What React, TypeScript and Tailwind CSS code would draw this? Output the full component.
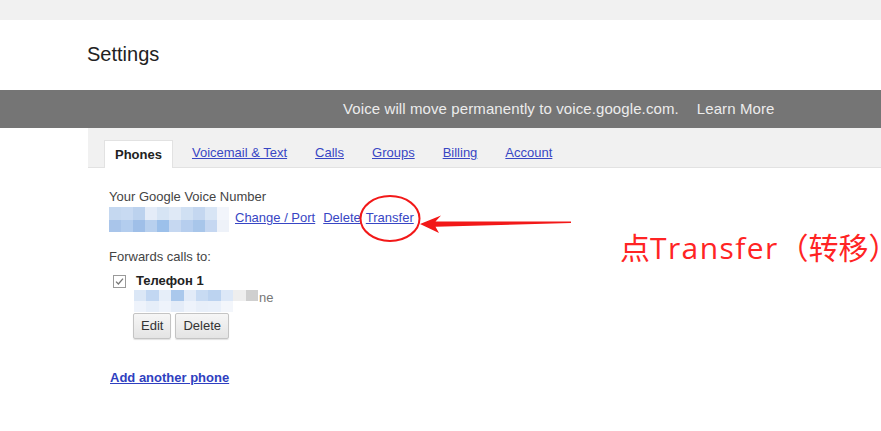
const numberTop = ['#c5d8f0', '#c8daf2', '#bcd2ee', '#e4ecf8', '#d6e4f4', '#dfe9f6', '#d0e0f3', '#c4d7f0', '#d8e5f5', '#f2f5fb'];
const numberBottom = ['#a9c5ea', '#b3cdee', '#9fbfe8', '#b8d0ee', '#9cc0ea', '#c6d8f1', '#b6ceee', '#a8c6ea', '#c5d7f1', '#eef2f9'];
const phoneTop = ['#dbe7f6', '#c2d7f2', '#e6eef9', '#aac8ec', '#e2ebf8', '#c8dbf3', '#bcd3f0', '#dde8f7', '#eeeeee', '#cfcfcf'];
const phoneBottom = ['#eef3fb', '#e6eef9', '#eef3fb', '#e4ecf8', '#eef3fb', '#e8eff9', '#e9f0fa', '#f3f6fb', '#ffffff', '#ffffff'];

function Mosaic({ top, bottom, cell }: { top: string[]; bottom: string[]; cell: string }) {
  return (
    <div className="flex flex-col">
      {[top, bottom].map((row, i) => (
        <div key={i} className="flex">
          {row.map((c, j) => (
            <div key={j} className={cell} style={{ backgroundColor: c }} />
          ))}
        </div>
      ))}
    </div>
  );
}

const tabs = ['Voicemail & Text', 'Calls', 'Groups', 'Billing', 'Account'];

export default function App() {
  return (
    <div className="relative w-[881px] h-[431px] overflow-hidden bg-white font-['Liberation_Sans',Arial,sans-serif] text-[13px] text-[#333]">
      <div className="h-[20px] bg-[#f1f1f1]" />
      <div className="h-[70px] pl-[87px] pt-[22px]">
        <h1 className="text-[20px] leading-[24px] text-[#222]">Settings</h1>
      </div>
      <div className="h-[38px] bg-[#757575] flex items-center pl-[343px] text-[15px] tracking-[0.1px] text-[#ececec]">
        <span>Voice will move permanently to voice.google.com.</span>
        <span className="ml-[18px]">Learn More</span>
      </div>

      <div className="ml-[88px]">
        <div className="h-[40px] bg-[#f1f1f1] border-b border-[#e2e2e2] flex items-end pl-[16px]">
          <div className="h-[28px] px-[10px] bg-white border border-b-0 border-[#e2e2e2] font-bold text-[#222] flex items-center -mb-px">
            Phones
          </div>
          <div className="flex items-center h-[28px] ml-[5px]">
            {tabs.map((t) => (
              <a key={t} className="px-[14px] text-[#3846c4] underline">
                {t}
              </a>
            ))}
          </div>
        </div>

        <div className="pl-[21px] pt-[21px]">
          <div className="leading-[16px] text-[#444]">Your Google Voice Number</div>
          <div className="mt-[2px] flex items-center">
            <Mosaic top={numberTop} bottom={numberBottom} cell="w-[12px] h-[12.5px]" />
            <div className="flex mb-[3px]">
              <a className="ml-[6px] text-[#3846c4] underline">Change / Port</a>
              <a className="ml-[8px] text-[#3846c4] underline">Delete</a>
              <a className="ml-[5px] text-[#3846c4] underline">Transfer</a>
            </div>
          </div>

          <div className="mt-[17px] leading-[16px] text-[#444]">Forwards calls to:</div>
          <div className="mt-[8px] flex items-center h-[16px]">
            <div className="ml-[4px] w-[13px] h-[13px] border border-[#9a9a9a] bg-white flex items-center justify-center">
              <svg width="9" height="9" viewBox="0 0 9 9">
                <path d="M1 4.6 L3.4 7 L8 1.6" fill="none" stroke="#777" strokeWidth="1.3" />
              </svg>
            </div>
            <span className="ml-[10px] font-bold text-[#222]">Телефон 1</span>
          </div>
          <div className="ml-[25px] mt-[1px] flex items-center">
            <Mosaic top={phoneTop} bottom={phoneBottom} cell="w-[12.4px] h-[11px]" />
            <span className="ml-[1px] -mt-[6px] text-[#777]">ne</span>
          </div>
          <div className="ml-[24px] mt-[1px] flex gap-[4px]">
            {['Edit', 'Delete'].map((b) => (
              <button
                key={b}
                type="button"
                className="h-[26px] px-[7px] rounded-[2px] border border-[#c4c4c4] bg-gradient-to-b from-[#f6f6f6] to-[#e4e4e4] text-[#333] shadow-[0_1px_1px_rgba(0,0,0,0.12)]"
              >
                {b}
              </button>
            ))}
          </div>

          <a className="block mt-[31px] ml-[1px] font-bold text-[#2f3fc0] underline leading-[16px]">
            Add another phone
          </a>
        </div>
      </div>

      <svg className="absolute left-0 top-0 pointer-events-none" width="881" height="431">
        <ellipse cx="390" cy="218.5" rx="29.5" ry="22.5" fill="none" stroke="#f21818" strokeWidth="2" />
        <polygon
          points="420,224 441,215.5 435.5,221.5 571,221.6 571,223 435.5,226.8 439,233"
          fill="#f21818"
        />
      </svg>
      <div className="absolute left-[620px] top-[231px] whitespace-nowrap text-[30px] leading-[30px] text-[#ff2424] font-['Noto_Sans_CJK_SC','Noto_Sans',sans-serif]">
        点<span className="font-['Open_Sans','Noto_Sans_CJK_SC',sans-serif] tracking-[1.4px]">Transfer</span>（转移）
      </div>
    </div>
  );
}
